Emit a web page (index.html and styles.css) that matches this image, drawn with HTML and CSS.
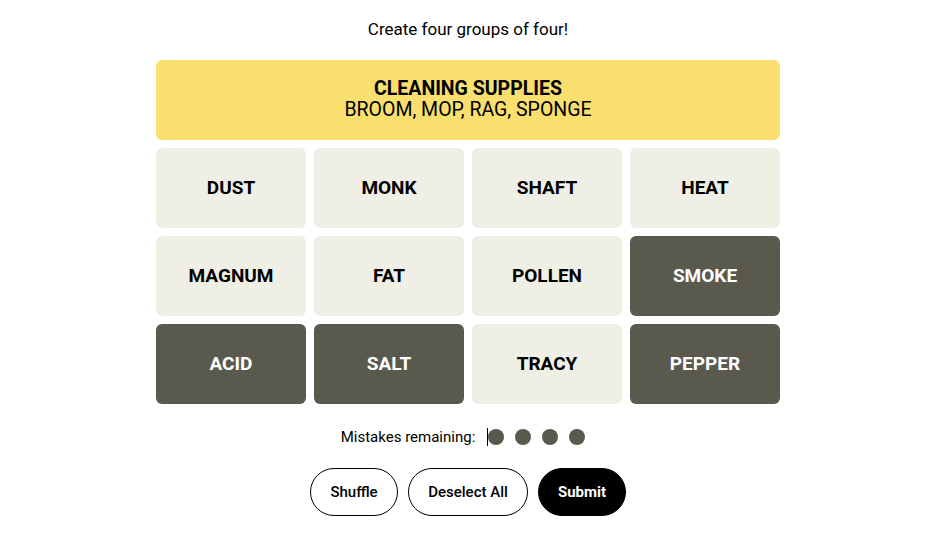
FILE: index.html
```html
<!DOCTYPE html>
<html lang="en">
<head>
  <meta charset="UTF-8" />
  <meta name="viewport" content="width=device-width, initial-scale=1.0"/>
  <title>Connections</title>
  <link rel="stylesheet" href="styles.css">
</head>
<body>
  <div class="page">
    <p class="prompt">Create four groups of four!</p>

    <div class="board">
      <div class="solved yellow">
        <h3>CLEANING SUPPLIES</h3>
        <p>BROOM, MOP, RAG, SPONGE</p>
      </div>

      <div class="grid">
        <button class="tile">DUST</button>
        <button class="tile">MONK</button>
        <button class="tile">SHAFT</button>
        <button class="tile">HEAT</button>
        <button class="tile">MAGNUM</button>
        <button class="tile">FAT</button>
        <button class="tile">POLLEN</button>
        <button class="tile selected">SMOKE</button>
        <button class="tile selected">ACID</button>
        <button class="tile selected">SALT</button>
        <button class="tile">TRACY</button>
        <button class="tile selected">PEPPER</button>
      </div>
    </div>

    <div class="mistakes">
      <span>Mistakes remaining:</span>
      <span class="dots"><i class="caret"></i><i class="dot"></i><i class="dot"></i><i class="dot"></i><i class="dot"></i></span>
    </div>

    <div class="controls">
      <button class="pill shuffle">Shuffle</button>
      <button class="pill deselect">Deselect All</button>
      <button class="pill submit">Submit</button>
    </div>
  </div>
</body>
</html>
```

FILE: styles.css
```css
body { margin: 0; background: #fff; color: #000; font-family: Roboto, "Liberation Sans", sans-serif; }
.page { width: 936px; display: flex; flex-direction: column; align-items: center; }

.prompt { margin: 19px 0 0; font-size: 17px; line-height: 20px; }

.board { width: 624px; margin-top: 21px; display: flex; flex-direction: column; gap: 8px; }
.solved { height: 80px; border-radius: 6px; display: flex; flex-direction: column; justify-content: center; align-items: center; padding-bottom: 2px; box-sizing: border-box; }
.solved h3 { margin: 0; font-size: 19.5px; line-height: 21px; font-weight: bold; }
.solved p { margin: 0; font-size: 19.5px; line-height: 21px; }
.yellow { background: #f9df6d; }

.grid { display: grid; grid-template-columns: repeat(4, 1fr); gap: 8px; }
.tile { height: 80px; padding: 0 0 2px; border: none; border-radius: 6px; background: #efefe6; color: #000; font-family: Roboto, "Liberation Sans", sans-serif; font-weight: bold; font-size: 19px; cursor: pointer; }
.tile.selected { background: #5a594e; color: #fff; }

.mistakes { margin: 24px 10px 0 0; display: flex; align-items: center; gap: 13px; font-size: 15px; }
.dots { display: flex; align-items: center; gap: 11px; position: relative; }
.dot { display: block; width: 16px; height: 16px; border-radius: 50%; background: #5a594e; }
.caret { position: absolute; left: -1px; top: -1px; width: 1px; height: 18px; background: #000; }

.controls { margin-top: 22px; display: flex; gap: 10px; }
.pill { height: 48px; padding: 0; border: 1px solid #000; border-radius: 24px; background: #fff; color: #000; font-family: Roboto, "Liberation Sans", sans-serif; font-size: 15px; font-weight: 500; cursor: pointer; }
.shuffle { width: 88px; }
.deselect { width: 120px; }
.pill.submit { width: 88px; background: #000; color: #fff; font-weight: bold; }
```
